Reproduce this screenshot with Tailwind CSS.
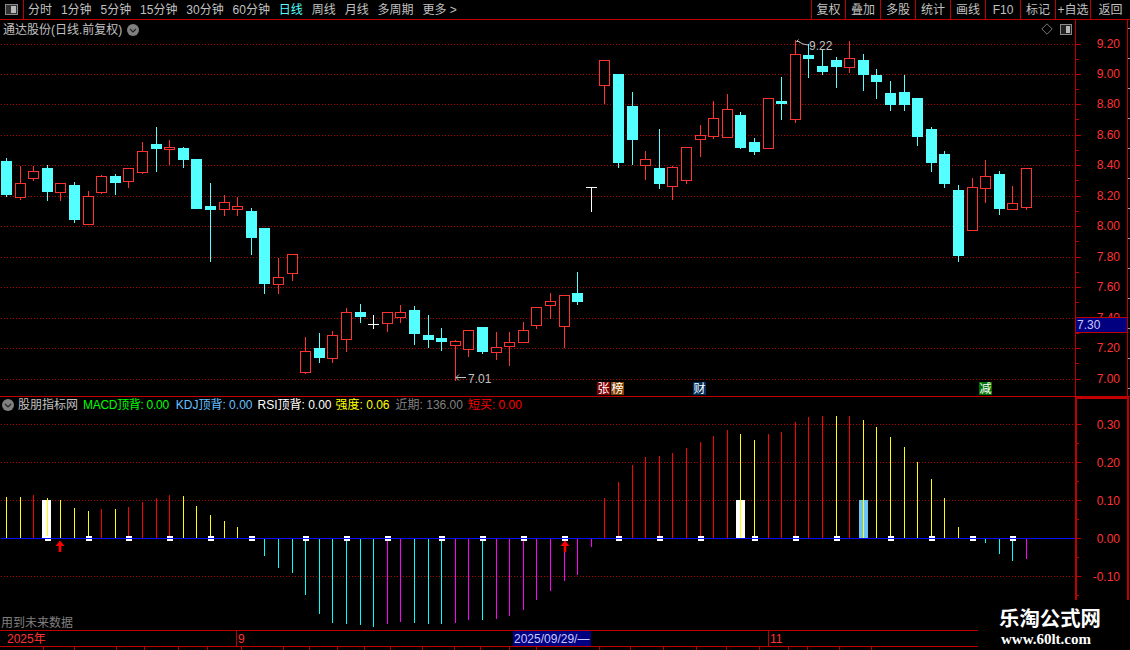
<!DOCTYPE html>
<html lang="zh-CN">
<head>
    <meta charset="UTF-8">
    <title>通达股份 日线</title>
    <script src="https://cdn.jsdelivr.net/npm/@tailwindcss/browser@4"></script>
</head>
<body class="bg-black font-['Liberation_Sans','Noto_Sans_CJK_SC',sans-serif] text-xs leading-none text-[#c0c0c0]">
<div class="relative w-[1130px] h-[650px] overflow-hidden bg-black">

    <!-- top toolbar -->
    <header class="flex h-5 items-center border-b border-[#c00000]">
        <div class="flex h-full w-6 items-center justify-center border-r border-[#c00000]">
            <svg width="13" height="11" viewBox="0 0 13 11" shape-rendering="crispEdges">
                <rect x="0.5" y="0.5" width="12" height="10" rx="1" fill="#333" stroke="#8a8a8a"/>
                <rect x="6" y="2" width="5" height="7" fill="#b8b8b8"/>
            </svg>
        </div>
        <nav class="flex gap-[8.9px] pl-1">
            <span>分时</span><span>1分钟</span><span>5分钟</span><span>15分钟</span><span>30分钟</span><span>60分钟</span>
            <span class="text-[#54ffff]">日线</span><span>周线</span><span>月线</span><span>多周期</span><span>更多 &gt;</span>
        </nav>
        <div class="ml-auto flex h-full">
            <span class="flex w-[34px] items-center justify-center border-l border-[#c00000]">复权</span>
            <span class="flex w-[35px] items-center justify-center border-l border-[#c00000]">叠加</span>
            <span class="flex w-[35px] items-center justify-center border-l border-[#c00000]">多股</span>
            <span class="flex w-[35px] items-center justify-center border-l border-[#c00000]">统计</span>
            <span class="flex w-[35px] items-center justify-center border-l border-[#c00000]">画线</span>
            <span class="flex w-[35px] items-center justify-center border-l border-[#c00000]">F10</span>
            <span class="flex w-[35px] items-center justify-center border-l border-[#c00000]">标记</span>
            <span class="flex w-[35px] items-center justify-center border-l border-[#c00000]">+自选</span>
            <span class="flex w-10 items-center justify-center border-l border-[#c00000]">返回</span>
        </div>
    </header>

    <!-- k-line panel, y 20-396 -->
    <section class="relative h-[377px] border-b border-[#c00000]">
        <svg id="kline" class="absolute inset-0" width="1130" height="377" viewBox="0 20 1130 377"></svg>
        <div class="relative flex h-[19px] items-center gap-[5px] pl-[3px]">
            <span>通达股份(日线.前复权)</span>
            <svg width="12" height="12" viewBox="0 0 12 12">
                <circle cx="6" cy="6" r="6" fill="#808080"/>
                <path d="M3 5l3 3 3-3" fill="none" stroke="#222" stroke-width="1.2"/>
            </svg>
        </div>
        <svg class="absolute left-[1041px] top-[3px]" width="12" height="12" viewBox="0 0 12 12">
            <path d="M6 .8L11.2 6 6 11.2 .8 6z" fill="none" stroke="#777"/>
        </svg>
        <svg class="absolute left-[1060px] top-1" width="12" height="11" viewBox="0 0 12 11" shape-rendering="crispEdges">
            <rect x="0.5" y="0.5" width="11" height="10" rx="1" fill="#222" stroke="#8a8a8a"/>
            <rect x="6" y="2" width="4" height="7" fill="#b8b8b8"/>
        </svg>
        <span class="absolute left-[597px] top-[362px] flex h-[13px] w-[13px] items-center justify-center bg-[#800000] text-white">张</span>
        <span class="absolute left-[611px] top-[362px] flex h-[13px] w-[13px] items-center justify-center bg-[#804000] text-white">榜</span>
        <span class="absolute left-[693px] top-[362px] flex h-[13px] w-[13px] items-center justify-center bg-[#003060] text-white">财</span>
        <span class="absolute left-[979px] top-[362px] flex h-[13px] w-[13px] items-center justify-center bg-[#007000] text-white">减</span>
        <span class="absolute left-[1075px] top-[297px] flex h-4 w-[53px] items-center border border-[#c00000] bg-[#000080] pl-px text-[#c8c8ff]">7.30</span>
    </section>

    <!-- indicator panel, y 397-629 -->
    <section class="relative h-[233px]">
        <svg id="macd" class="absolute inset-0" width="1130" height="233" viewBox="0 397 1130 233"></svg>
        <div class="relative flex h-4 items-center pl-[2px]">
            <svg class="mr-1" width="12" height="12" viewBox="0 0 12 12">
                <circle cx="6" cy="6" r="6" fill="#808080"/>
                <path d="M3 5l3 3 3-3" fill="none" stroke="#222" stroke-width="1.2"/>
            </svg>
            <span>股朋指标网</span>
            <span class="ml-[5px] tracking-[-0.3px] text-[#00ff00]">MACD顶背: 0.00</span>
            <span class="ml-[7px] text-[#66c0ff]">KDJ顶背: 0.00</span>
            <span class="ml-[5px] text-white">RSI顶背: 0.00</span>
            <span class="ml-1 text-[#ffff00]">强度: 0.06</span>
            <span class="ml-[6px] text-[#808080]">近期: 136.00</span>
            <span class="ml-[5px] text-[#ff0000]">短买: 0.00</span>
        </div>
        <span class="absolute bottom-px left-px text-[#808080]">用到未来数据</span>
    </section>

    <!-- time axis -->
    <footer class="relative flex h-[17px] w-[978px] items-center border-y border-[#c00000] text-[#ff3232]">
        <span class="w-[236px] pl-[7px]">2025年</span>
        <span class="flex h-full w-[277px] items-center border-l border-[#c00000] pl-px">9</span>
        <span class="flex h-full w-[78px] items-center bg-[#000080] pl-px text-[#c8c8ff]">2025/09/29/—</span>
        <span class="h-full w-[177px]"></span>
        <span class="flex h-full items-center border-l border-[#c00000] pl-px">11</span>
    </footer>
    <svg id="status" width="1130" height="3" viewBox="0 647 1130 3"></svg>

    <!-- watermark -->
    <div class="absolute left-[999px] top-[609px] flex flex-col items-start">
        <span class="text-[20.4px] font-bold text-white">乐淘公式网</span>
        <span class="ml-[2px] mt-[3px] font-['Liberation_Serif',serif] text-[15px] font-bold text-white">www.60lt.com</span>
    </div>
</div>

<script>
// candles: type, high, body top, body bottom, low (pixel rows of the picture)
var candles = [
['c',158,161,194,196],['r',166,183,197,199],['r',166,171,178,180],['c',165,168,191,200],['r',183,183,192,200],
['c',182,185,219,222],['r',191,196,224,224],['r',175,176,192,193],['c',174,176,182,194],['r',168,168,181,187],
['r',142,151,172,173],['c',127,144,148,171],['r',140,147,149,164],['c',147,148,159,167],['c',159,159,208,208],
['c',183,206,209,261],['r',195,202,209,215],['r',197,206,209,215],['c',208,211,237,254],['c',228,228,283,293],
['r',258,277,284,293],['r',254,254,273,280],['r',337,351,372,373],['c',333,348,357,362],['r',331,335,358,362],
['r',308,312,339,351],['c',304,312,316,322],['w',315,324,324,328],['r',312,312,323,331],['r',305,312,317,322],
['c',306,310,333,344],['c',315,335,339,347],['c',328,338,341,350],['r',340,341,345,380],['r',330,330,349,356],
['c',327,327,351,353],['r',332,347,352,359],['r',332,342,346,365],['r',322,330,342,342],['r',307,307,325,328],
['r',293,301,305,318],['r',295,295,326,347],['c',272,293,301,304],['w',187,187,187,211],['r',60,60,85,103],
['c',74,74,162,167],['c',92,106,139,164],['r',151,159,165,179],['c',129,168,183,188],['r',166,167,186,199],
['r',147,147,180,183],['r',125,135,139,156],['r',101,118,136,138],['r',94,109,137,137],['c',112,115,147,148],
['c',138,142,151,154],['r',98,98,148,148],['c',77,101,103,119],['r',40,54,119,122],['c',44,55,58,77],
['c',50,66,71,74],['c',57,60,66,87],['r',41,58,67,72],['c',54,60,74,90],['c',69,75,81,98],
['c',81,93,104,110],['c',75,92,104,110],['c',98,98,136,145],['c',127,129,162,171],['c',151,154,183,187],
['c',185,190,255,261],['r',178,187,230,230],['r',160,176,188,202],['c',171,174,208,214],['r',186,203,209,209],
['r',168,168,207,209]];

// indicator bars: colour key, end row
var bars = [
['y',497],['y',497],['r',495],['y',498],['y',500],['y',508],['y',511],['r',509],['y',509],['r',507],
['r',502],['r',498],['r',495],['y',496],['y',506],['y',515],['y',521],['y',527],null,['c',555],
['c',567],['c',572],['c',594],['c',613],['c',622],['c',623],['c',624],['c',626],['m',623],['m',621],
['c',622],['c',623],['c',623],['m',622],['m',619],['c',619],['m',618],['m',615],['m',609],['m',599],
['m',590],['m',580],['m',574],['m',546],['r',498],['r',482],['r',465],['r',457],['r',456],['r',453],
['r',448],['r',442],['r',436],['r',430],['y',434],['y',440],['r',434],['r',432],['r',422],['r',417],
['r',416],['y',416],['r',416],['y',420],['y',427],['y',437],['y',447],['y',462],['y',479],['y',498],
['y',527],null,['c',542],['c',553],['c',560],['m',558]];

var CYAN = '#54ffff', RED = '#ff3232', LINE = '#c00000', DOT = '#b00000';
var barColors = {y:'#ffff00', r:'#ff0000', c:'#00ffff', m:'#ff00ff'};
var markers = [3,6,9,12,15,18,22,25,28,32,35,38,41,45,48,51,55,58,61,65,68,71,74];

function cx(i) { return Math.round(6 + 13.6 * i); }
function rect(x, y, w, h, fill) {
    return '<rect x="'+x+'" y="'+y+'" width="'+w+'" height="'+h+'" fill="'+fill+'"/>';
}
function label(x, y, s, fill, anchor) {
    return '<text x="'+x+'" y="'+y+'" fill="'+fill+'" font-size="12" text-anchor="'+(anchor||'start')+'">'+s+'</text>';
}
function grid(y) {
    return '<line x1="1" x2="1075" y1="'+(y+.5)+'" y2="'+(y+.5)+'" stroke="'+DOT+'" stroke-dasharray="1 2" shape-rendering="crispEdges"/>';
}

function drawKline() {
    var s = '';
    var rows = [[44,'9.20'],[74,'9.00'],[104,'8.80'],[135,'8.60'],[165,'8.40'],[196,'8.20'],[226,'8.00'],[257,'7.80'],[287,'7.60'],[318,'7.40'],[348,'7.20'],[379,'7.00']];
    rows.forEach(function(r, n) {
        s += grid(r[0]);
        s += rect(1075, r[0], 6, 1, LINE);
        if (n < rows.length - 1) s += rect(1075, r[0] + 15, 4, 1, LINE);
        s += label(1120, r[0] + 4, r[1], RED, 'end');
    });
    s += rect(1075, 20, 1, 376, LINE) + rect(1127, 20, 1, 376, LINE);
    for (var t = 28; t < 396; t += 30) s += rect(1128, t, 2, 1, '#9a9a9a');
    candles.forEach(function(c, i) {
        var x = cx(i), type = c[0];
        if (type == 'w') {
            s += rect(x, c[1], 1, c[4] - c[1] + 1, '#fff') + rect(x - 5, c[2], 11, 1, '#fff');
        } else if (type == 'c') {
            s += rect(x, c[1], 1, c[4] - c[1] + 1, CYAN) + rect(x - 5, c[2], 11, c[3] - c[2] + 1, CYAN);
        } else {
            s += rect(x, c[1], 1, c[2] - c[1], RED) + rect(x, c[3], 1, c[4] - c[3] + 1, RED);
            s += '<rect x="'+(x-4.5)+'" y="'+(c[2]+.5)+'" width="10" height="'+(c[3]-c[2])+'" fill="#000" stroke="'+RED+'"/>';
        }
    });
    // high and low notes
    s += '<path d="M796.5 41.5h3M796.5 41.5l2-2M799 42l4 2 5 1" fill="none" stroke="#c0c0c0"/>' + label(809, 50, '9.22', '#c0c0c0');
    s += '<path d="M456 377.5h10M456 377.5l3-3M456 377.5l3 3" fill="none" stroke="#c0c0c0"/>' + label(468, 383, '7.01', '#c0c0c0');
    document.getElementById('kline').innerHTML = s;
}

function drawMacd() {
    var s = '';
    s += rect(1075, 397, 53, 2, LINE) + rect(1075, 397, 2, 203, LINE) + rect(1127, 397, 2, 203, LINE);
    [[424,'0.30'],[462,'0.20'],[500,'0.10'],[538,'0.00'],[576,'-0.10']].forEach(function(r) {
        s += grid(r[0]);
        s += rect(1075, r[0], 6, 1, LINE) + rect(1075, r[0] + 19, 4, 1, LINE);
        s += label(1120, r[0] + 5, r[1], RED, 'end');
    });
    s += rect(42, 500, 9, 38, '#fff') + rect(736, 500, 9, 38, '#fff') + rect(859, 500, 9, 38, '#6cc4f5');
    bars.forEach(function(b, i) {
        if (!b) return;
        var x = cx(i);
        if (b[1] < 538) s += rect(x, b[1], 1, 538 - b[1], barColors[b[0]]);
        else s += rect(x, 539, 1, b[1] - 538, barColors[b[0]]);
    });
    markers.forEach(function(i) { s += rect(cx(i) - 2, 536, 6, 5, '#fff'); });
    s += rect(1, 538, 1074, 1, '#0a0aff');
    [60, 565].forEach(function(x) {
        s += '<path d="M'+x+' 540.5l4.5 5.5h-3.2v6h-2.6v-6h-3.2z" fill="#ff0000"/>';
    });
    document.getElementById('macd').innerHTML = s;
}

function drawStatus() {
    var s = '';
    [43,74,116,144,178,207,241,283,309,337,364,390,422,454,480,509,536,599,630,663,696,726,759,788,807,839,871].forEach(function(x) {
        s += rect(x, 647, 1, 3, LINE);
    });
    document.getElementById('status').innerHTML = s;
}

drawKline();
drawMacd();
drawStatus();
</script>
</body>
</html>
